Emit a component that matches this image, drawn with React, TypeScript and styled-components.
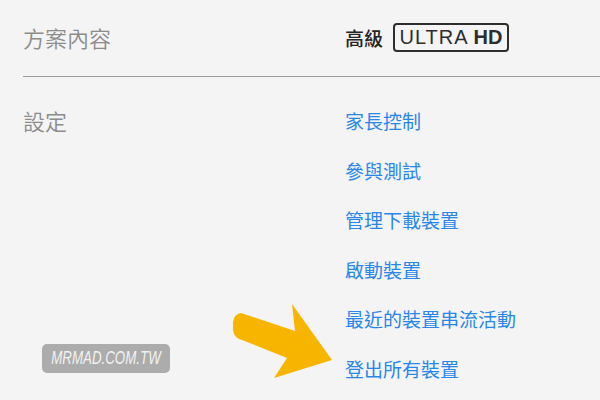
import React from 'react';
import styled, { createGlobalStyle } from 'styled-components';

const GlobalStyle = createGlobalStyle`
  html, body {
    margin: 0;
    padding: 0;
    background: #f4f4f4;
  }
  body {
    font-family: "Noto Sans CJK TC", "Noto Sans", sans-serif;
  }
`;

const Page = styled.div`
  width: 600px;
  height: 400px;
  background: #f4f4f4;
  position: relative;
  overflow: hidden;
`;

const Row = styled.div<{ $divider?: boolean }>`
  display: grid;
  grid-template-columns: 322px 1fr;
  margin-left: 23px;
  ${(p) =>
    p.$divider
      ? `
    height: 76px;
    align-items: center;
    border-bottom: 1.5px solid #9c9c9c;
  `
      : `
    padding-top: 19px;
    align-items: start;
  `}
`;

const Label = styled.div`
  font-size: 22px;
  line-height: 49.6px;
  color: #8c8c8c;
  font-weight: 350;
`;

const PlanValue = styled.div`
  display: flex;
  align-items: center;
  gap: 10px;
  margin-top: -2px;
`;

const PlanName = styled.span`
  font-size: 19px;
  font-weight: 500;
  color: #262626;
`;

const Badge = styled.span`
  display: inline-flex;
  align-items: center;
  justify-content: center;
  box-sizing: border-box;
  width: 116px;
  height: 29px;
  border: 2px solid #2e2e2e;
  border-radius: 4px;
  font-family: "Liberation Sans", Arial, sans-serif;
  font-size: 20px;
  color: #2e2e2e;
  gap: 5px;
`;

const BadgeText = styled.span<{ $bold?: boolean }>`
  font-weight: ${(p) => (p.$bold ? 700 : 400)};
  letter-spacing: ${(p) => (p.$bold ? '0' : '1px')};
`;

const LinkList = styled.div`
  display: flex;
  flex-direction: column;
`;

const LinkItem = styled.a`
  font-size: 19px;
  line-height: 49.6px;
  color: #2a87e9;
  text-decoration: none;
  white-space: nowrap;
`;

const Watermark = styled.div`
  position: absolute;
  left: 42px;
  top: 344px;
  width: 128px;
  height: 29px;
  border-radius: 5px;
  background: #acacac;
  display: flex;
  align-items: center;
  justify-content: center;
  overflow: hidden;
`;

const WatermarkText = styled.span`
  display: inline-block;
  font-family: "Liberation Sans", Arial, sans-serif;
  font-style: italic;
  font-size: 18px;
  color: #f2f2f2;
  transform: scaleX(0.74);
  white-space: nowrap;
`;

const Arrow = styled.svg`
  position: absolute;
  left: 225px;
  top: 295px;
`;

const links = ['家長控制', '參與測試', '管理下載裝置', '啟動裝置', '最近的裝置串流活動', '登出所有裝置'];

export default function App() {
  return (
    <Page>
      <GlobalStyle />
      <Row $divider>
        <Label>方案內容</Label>
        <PlanValue>
          <PlanName>高級</PlanName>
          <Badge>
            <BadgeText>ULTRA</BadgeText>
            <BadgeText $bold>HD</BadgeText>
          </Badge>
        </PlanValue>
      </Row>
      <Row>
        <Label>設定</Label>
        <LinkList>
          {links.map((l) => (
            <LinkItem key={l} href="#">
              {l}
            </LinkItem>
          ))}
        </LinkList>
      </Row>
      <Watermark>
        <WatermarkText>MRMAD.COM.TW</WatermarkText>
      </Watermark>
      <Arrow width="115" height="92" viewBox="0 0 115 92">
        <path
          d="M16 18 L70 36 L67 9 L107 65 L49 83 L62 63 L17 45 Q9 43 8 35 L8 27 Q9 19 16 18 Z"
          fill="#f8b500"
        />
      </Arrow>
    </Page>
  );
}
